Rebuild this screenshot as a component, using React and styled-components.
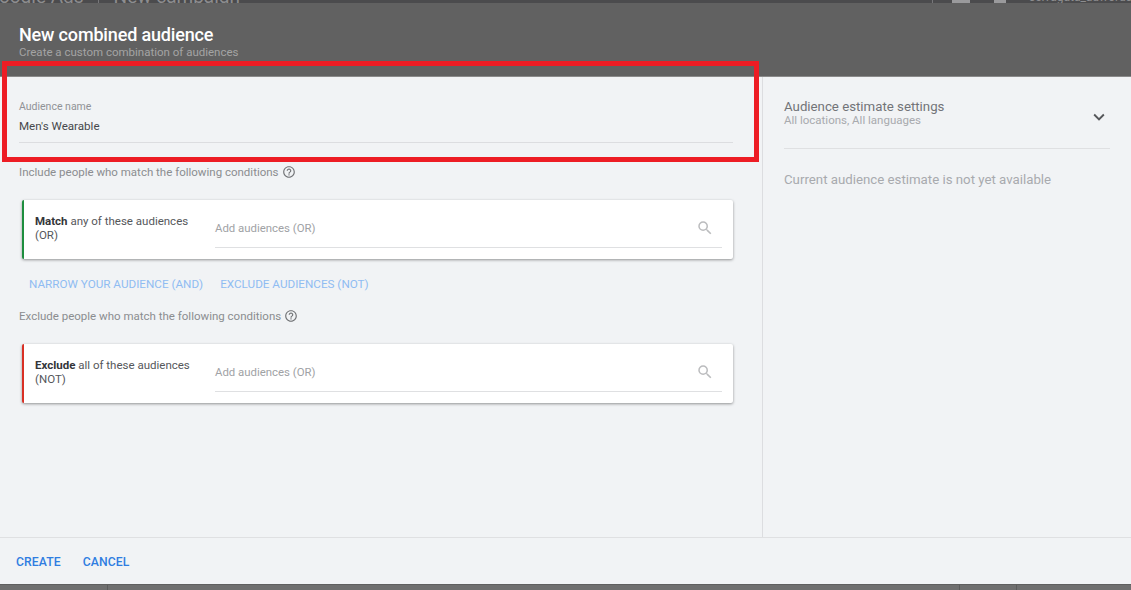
import React from "react";
import styled, { createGlobalStyle } from "styled-components";
import { MdSearch, MdHelpOutline, MdExpandMore } from "react-icons/md";

const GlobalStyle = createGlobalStyle`
  html, body {
    margin: 0;
    padding: 0;
    height: 100%;
    overflow: hidden;
    background: #6e6e6e;
  }
  body {
    font-family: Roboto, "Liberation Sans", sans-serif;
  }
`;

const Page = styled.div`
  position: relative;
  display: flex;
  flex-direction: column;
  width: 1131px;
  height: 590px;
  overflow: hidden;
`;

const BehindBar = styled.div`
  display: flex;
  align-items: flex-end;
  flex: 0 0 3px;
  height: 3px;
  overflow: hidden;
  background: #4b4b4d;
  color: #8d8d8f;
`;

const BehindTitle = styled.span`
  flex: 0 0 auto;
  margin-left: ${(p) => p.$left}px;
  margin-bottom: -6px;
  font-size: ${(p) => p.$size}px;
  line-height: 24px;
  white-space: nowrap;
`;

const BehindRule = styled.span`
  flex: 0 0 1px;
  height: 3px;
  margin-left: ${(p) => p.$left}px;
  background: #77777a;
`;

const BehindDot = styled.span`
  flex: 0 0 ${(p) => p.$width}px;
  height: 3px;
  margin-left: ${(p) => p.$left}px;
  background: #9a9a9c;
`;

const Header = styled.header`
  flex: 0 0 74px;
  box-sizing: border-box;
  padding: 22px 0 0 19px;
  background: #616161;
  border-bottom: 1px solid #8a8a8a;
`;

const Title = styled.h1`
  margin: 0;
  font-size: 18px;
  font-weight: 500;
  line-height: 20px;
  letter-spacing: -0.16px;
  color: #ffffff;
`;

const Subtitle = styled.p`
  margin: 0;
  font-size: 11.5px;
  line-height: 15px;
  color: #a4a4a4;
`;

const Body = styled.main`
  display: flex;
  flex: 0 0 460px;
  background: #f1f3f5;
  border-bottom: 1px solid #dfe0e2;
`;

const Editor = styled.section`
  flex: 0 0 763px;
  box-sizing: border-box;
  padding: 23px 29px 0 19px;
  border-right: 1px solid #dcdde0;
`;

const FieldLabel = styled.label`
  display: block;
  font-size: 10.5px;
  line-height: 14px;
  color: #909296;
`;

const FieldValue = styled.div`
  margin-top: 5px;
  padding-bottom: 8px;
  font-size: 11.6px;
  line-height: 15px;
  color: #46484b;
  border-bottom: 1px solid #dcdde0;
`;

const ConditionHeading = styled.div`
  display: flex;
  align-items: center;
  gap: 3px;
  margin-top: ${(p) => p.$top}px;
  font-size: 11.5px;
  line-height: 16px;
  color: #8b8d90;

  svg {
    font-size: 14px;
    color: #717376;
  }
`;

const Card = styled.div`
  display: flex;
  align-items: stretch;
  height: 59px;
  box-sizing: border-box;
  margin: ${(p) => p.$top}px 0 0 3px;
  padding: 0 11px;
  background: #ffffff;
  border-left: 2px solid ${(p) => p.$accent};
  border-radius: 2px;
  box-shadow: 0 1px 3px rgba(0, 0, 0, 0.4);
`;

const CardLabel = styled.div`
  flex: 0 0 180px;
  box-sizing: border-box;
  align-self: center;
  margin-bottom: 3px;
  padding-right: 12px;
  font-size: 11.5px;
  line-height: 14px;
  color: #55575b;

  b {
    font-weight: 700;
    color: #333539;
  }
`;

const SearchField = styled.div`
  display: flex;
  flex: 1;
  align-items: center;
  justify-content: space-between;
  height: 48px;
  box-sizing: border-box;
  padding: 8px 8px 0 0;
  font-size: 11.4px;
  color: #a0a2a5;
  border-bottom: 1px solid #dfe0e2;

  svg {
    font-size: 18px;
    color: #bbbcbe;
  }
`;

const LinkRow = styled.div`
  display: flex;
  gap: 17px;
  margin: 17px 0 0 10px;
`;

const TextLink = styled.a`
  font-size: 11.7px;
  line-height: 16px;
  color: #8fbcf2;
`;

const Sidebar = styled.aside`
  flex: 1;
  box-sizing: border-box;
  padding: 22px 21px 0;
`;

const SettingsRow = styled.div`
  display: flex;
  align-items: center;
  justify-content: space-between;
  height: 49px;
  border-bottom: 1px solid #dfe0e2;

  svg {
    margin-top: -14px;
    font-size: 22px;
    color: #55575a;
  }
`;

const SettingsTitle = styled.div`
  margin-top: -21px;
  font-size: 13.25px;
  line-height: 15px;
  color: #727478;
`;

const SettingsHint = styled.div`
  font-size: 11.5px;
  line-height: 13px;
  color: #a8aaae;
`;

const EstimateNote = styled.p`
  margin: 22px 0 0;
  font-size: 13.25px;
  line-height: 18px;
  color: #a8aaae;
`;

const Footer = styled.footer`
  display: flex;
  flex: 0 0 46px;
  align-items: center;
  gap: 22px;
  box-sizing: border-box;
  padding: 2px 0 0 16px;
  background: #f1f3f5;
`;

const FooterButton = styled.button`
  padding: 0;
  border: 0;
  background: none;
  font-family: inherit;
  font-size: 12.2px;
  font-weight: 500;
  letter-spacing: 0.1px;
  color: #2f7de1;
`;

const BehindBottom = styled.div`
  display: flex;
  flex: 1;
  background: #6f6f6f;
  border-top: 1px solid #5f5f5f;
`;

const BottomCell = styled.span`
  flex: 0 0 ${(p) => p.$width}px;
  border-right: 1px solid #5c5c5c;
`;

const Highlight = styled.div`
  position: absolute;
  left: 2px;
  top: 61px;
  width: 757px;
  height: 101px;
  box-sizing: border-box;
  border: 5px solid #ed1c24;
  pointer-events: none;
`;

const AudienceCard = ({ accent, top, lead, rest }) => (
  <Card $accent={accent} $top={top}>
    <CardLabel>
      <b>{lead}</b> {rest}
    </CardLabel>
    <SearchField>
      Add audiences (OR)
      <MdSearch />
    </SearchField>
  </Card>
);

export default function App() {
  return (
    <Page>
      <GlobalStyle />
      <BehindBar>
        <BehindTitle $left={-14} $size={19}>Google Ads</BehindTitle>
        <BehindRule $left={14} />
        <BehindTitle $left={15} $size={19}>New campaign</BehindTitle>
        <BehindRule $left={692} />
        <BehindDot $left={19} $width={18} />
        <BehindDot $left={24} $width={12} />
        <BehindTitle $left={23} $size={12}>selvagata_adwords@g</BehindTitle>
      </BehindBar>
      <Header>
        <Title>New combined audience</Title>
        <Subtitle>Create a custom combination of audiences</Subtitle>
      </Header>
      <Body>
        <Editor>
          <FieldLabel>Audience name</FieldLabel>
          <FieldValue>Men's Wearable</FieldValue>
          <ConditionHeading $top={21}>
            Include people who match the following conditions
            <MdHelpOutline />
          </ConditionHeading>
          <AudienceCard
            accent="#1e8e3e"
            top={20}
            lead="Match"
            rest="any of these audiences (OR)"
          />
          <LinkRow>
            <TextLink>NARROW YOUR AUDIENCE (AND)</TextLink>
            <TextLink>EXCLUDE AUDIENCES (NOT)</TextLink>
          </LinkRow>
          <ConditionHeading $top={16}>
            Exclude people who match the following conditions
            <MdHelpOutline />
          </ConditionHeading>
          <AudienceCard
            accent="#d93025"
            top={20}
            lead="Exclude"
            rest="all of these audiences (NOT)"
          />
        </Editor>
        <Sidebar>
          <SettingsRow>
            <div>
              <SettingsTitle>Audience estimate settings</SettingsTitle>
              <SettingsHint>All locations, All languages</SettingsHint>
            </div>
            <MdExpandMore />
          </SettingsRow>
          <EstimateNote>Current audience estimate is not yet available</EstimateNote>
        </Sidebar>
      </Body>
      <Footer>
        <FooterButton>CREATE</FooterButton>
        <FooterButton>CANCEL</FooterButton>
      </Footer>
      <BehindBottom>
        <BottomCell $width={107} />
        <BottomCell $width={851} />
        <BottomCell $width={56} />
      </BehindBottom>
      <Highlight />
    </Page>
  );
}
